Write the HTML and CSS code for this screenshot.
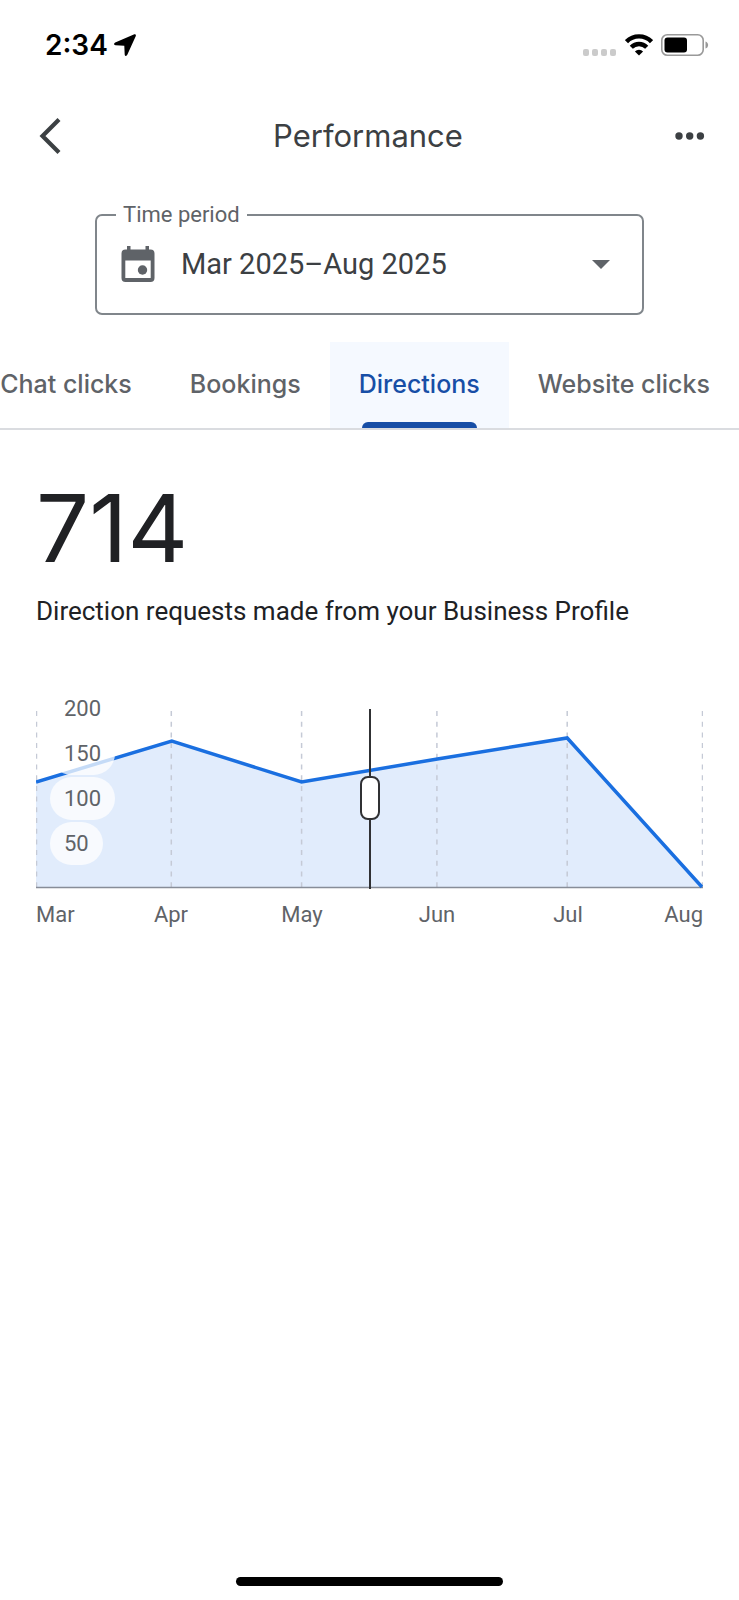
FILE: index.html
```html
<!DOCTYPE html>
<html lang="en">
<head>
<meta charset="utf-8">
<meta name="viewport" content="width=device-width, initial-scale=1">
<title>Performance</title>
<link rel="stylesheet" href="styles.css">
</head>
<body>
<div class="screen">
  <div class="status">
    <div class="status-left">
      <span class="clock">2:34</span>
      <svg class="location" viewBox="0 0 22 22" width="22" height="22" aria-hidden="true"><path d="M19.800.4 1.200 8.600C-.5 9.400-.2 11.200 1.500 11.300L10.300 11.800 10.700 20.400C10.800 22.200 12.600 22.400 13.300 20.800L21.700 2.300C22.300.8 21.300-.3 19.800.4Z"/></svg>
    </div>
    <div class="status-right">
      <svg viewBox="0 0 34 22" width="34" height="22" aria-hidden="true" fill="#cbcbcb"><rect x="0" y="15" width="6" height="7" rx="2"/><rect x="9" y="15" width="6" height="7" rx="2"/><rect x="18" y="15" width="6" height="7" rx="2"/><rect x="27" y="15" width="6" height="7" rx="2"/></svg>
      <svg viewBox="0 0 28 22" width="28" height="22" aria-hidden="true" fill="none" stroke="#000" stroke-width="4.400"><path d="M1.500 7.600A17.500 17.500 0 0 1 26.500 7.600"/><path d="M6.300 13.200A10.900 10.900 0 0 1 21.700 13.200"/><path d="M14 21.600 9.900 17.500A5.800 5.800 0 0 1 18.100 17.500Z" fill="#000" stroke="none"/></svg>
      <svg viewBox="0 0 48 22" width="48" height="22" aria-hidden="true"><rect x=".8" y=".8" width="41.400" height="20.400" rx="5.500" fill="#fff" stroke="#999" stroke-width="1.600"/><rect x="3.500" y="3.500" width="22.500" height="15" rx="3" fill="#000"/><path d="M44.500 7.500C48 8.500 48 13.500 44.500 14.500Z" fill="#999"/></svg>
    </div>
  </div>

  <header class="appbar">
    <button class="icon-button" type="button" aria-label="Back">
      <svg viewBox="0 0 22 36" width="22" height="36"><path d="M20 1.500 3.500 18 20 34.500" fill="none" stroke="#3c4043" stroke-width="4.200"/></svg>
    </button>
    <h1 class="title">Performance</h1>
    <button class="icon-button" type="button" aria-label="More options">
      <svg viewBox="0 0 30 8" width="30" height="8" fill="#3c4043"><circle cx="4" cy="4" r="3.700"/><circle cx="14.700" cy="4" r="3.700"/><circle cx="25.400" cy="4" r="3.700"/></svg>
    </button>
  </header>

  <main>
    <fieldset class="period">
      <legend class="period-label"><label for="period">Time period</label></legend>
      <div class="period-row">
        <svg class="calendar" viewBox="0 0 34 36" width="34" height="36" aria-hidden="true"><path fill="#5f6368" fill-rule="evenodd" d="M6 0H9.500V3.500H24.500V0H28V3.500H29.500A4 4 0 0 1 33.500 7.500V32A4 4 0 0 1 29.500 36H4.500A4 4 0 0 1 .5 32V7.500A4 4 0 0 1 4.500 3.500H6ZM4.300 14.500V32H29.700V14.500Z"/><circle cx="21.500" cy="24" r="4.700" fill="#5f6368"/></svg>
        <select class="period-select" id="period"><option>Mar 2025–Aug 2025</option></select>
        <svg class="arrow" viewBox="0 0 18 9" width="18" height="9" aria-hidden="true"><path d="M0 0H18L9 9Z" fill="#5f6368"/></svg>
      </div>
    </fieldset>

    <div class="tabs" role="tablist">
      <button class="tab" type="button" role="tab" aria-selected="false">Chat clicks</button>
      <button class="tab" type="button" role="tab" aria-selected="false">Bookings</button>
      <button class="tab tab-active" type="button" role="tab" aria-selected="true">Directions</button>
      <button class="tab" type="button" role="tab" aria-selected="false">Website clicks</button>
    </div>

    <section class="metric">
      <p class="total">714</p>
      <p class="caption">Direction requests made from your Business Profile</p>

      <div class="chart">
        <div class="plot">
          <svg class="series" viewBox="0 0 668 180" preserveAspectRatio="none" aria-hidden="true">
            <path d="M0 73 136 32 266 73 402 50 532 29 667 179H0Z" fill="#e1ecfc"/>
            <path d="M.5 2V179M135.500 2V179M266 2V179M401.500 2V179M532 2V179M667.500 2V179" stroke="#c5cad6" stroke-width="1.500" stroke-dasharray="5 5.700" fill="none"/>
            <path d="M0 178.500H668" stroke="#878d98" stroke-width="1.600"/>
            <path d="M0 73 136 32 266 73 402 50 532 29 667 178" fill="none" stroke="#1a6fe0" stroke-width="3.500"/>
          </svg>
          <div class="scale"><span>200</span><span>150</span><span>100</span><span>50</span></div>
          <div class="marker"></div>
          <input class="scrubber" type="range" min="0" max="100" value="50" aria-label="Date on chart">
        </div>
        <div class="months"><span>Mar</span><span>Apr</span><span>May</span><span>Jun</span><span>Jul</span><span>Aug</span></div>
      </div>
    </section>
  </main>
  <div class="home-bar"></div>
</div>
</body>
</html>
```
FILE: styles.css
```css
* { box-sizing: border-box; }

body {
  margin: 0;
  background: #fff;
  color: #202124;
  font-family: Roboto, "Liberation Sans", sans-serif;
}

button, select { font: inherit; }
svg { display: block; flex: none; }
p, h1 { margin: 0; font-weight: 400; }

.screen {
  display: flex;
  flex-direction: column;
  min-height: 100vh;
  overflow: hidden;
}

main { flex: 1; }

.status {
  display: flex;
  justify-content: space-between;
  align-items: center;
  height: 89px;
  padding: 0 30px 0 45px;
}
.status-left { display: flex; align-items: center; gap: 6px; }
.status-right { display: flex; align-items: center; gap: 8px; }
.clock {
  color: #000;
  font-family: Inter, sans-serif;
  font-size: 28px;
  font-weight: 600;
  line-height: 32px;
}

.appbar {
  display: flex;
  justify-content: space-between;
  align-items: center;
  height: 94px;
  padding: 0 34px 0 39px;
}
.icon-button {
  display: flex;
  padding: 0;
  border: 0;
  background: none;
}
.title {
  color: #3c4043;
  font-family: Inter, sans-serif;
  font-size: 31px;
  line-height: 40px;
}

.period {
  margin: 20px 95px 27px;
  padding: 0 24px 0 19px;
  border: 2px solid #80868b;
  border-radius: 7px;
  min-width: 0;
}
.period-label {
  padding: 0 7px;
  color: #5f6368;
  font-size: 22px;
  line-height: 24px;
}
.period-row {
  display: flex;
  align-items: center;
  height: 86px;
  padding: 0 0 12px 5px;
}
.period-select {
  flex: 1;
  min-width: 0;
  height: 48px;
  margin-left: 26px;
  padding: 0;
  border: 0;
  background: none;
  appearance: none;
  color: #3c4043;
  font-size: 29px;
}
.arrow { margin-right: 8px; }

.tabs {
  display: flex;
  justify-content: flex-end;
  border-bottom: 2px solid #dadce0;
}
.tab {
  position: relative;
  flex: none;
  height: 86px;
  padding: 0 29px 2px;
  border: 0;
  background: none;
  color: #5f6368;
  font-family: Inter, sans-serif;
  font-size: 25px;
  font-weight: 500;
  white-space: nowrap;
}
.tab-active { background: #f5f9ff; color: #174ea6; }
.tab-active::after {
  content: "";
  position: absolute;
  right: 32px;
  bottom: 0;
  left: 32px;
  height: 6px;
  border-radius: 6px 6px 0 0;
  background: #174ea6;
}

.metric { padding: 50px 36px 0; }
.total {
  font-family: Inter, sans-serif;
  font-size: 94px;
  line-height: 96px;
}
.caption { margin-top: 19px; font-size: 26px; line-height: 32px; }

.chart { margin-top: 82px; color: #5f6368; font-size: 22px; line-height: 27px; }
.plot { position: relative; height: 180px; }
.series { width: 100%; height: 100%; }
.scale {
  position: absolute;
  top: -22px;
  left: 14px;
  display: flex;
  flex-direction: column;
  align-items: flex-start;
  gap: 2px;
}
.scale span {
  padding: 8px 14px;
  border-radius: 22px;
  background: rgba(255, 255, 255, 0.75);
}
.marker {
  position: absolute;
  top: 0;
  bottom: 0;
  left: 50%;
  width: 2px;
  margin-left: -1px;
  background: #303134;
}
.scrubber {
  position: absolute;
  top: 67px;
  left: 0;
  width: 100%;
  height: 44px;
  margin: 0;
  background: none;
  appearance: none;
}
.scrubber::-webkit-slider-thumb {
  width: 20px;
  height: 44px;
  border: 2px solid #303134;
  border-radius: 8px;
  background: #fff;
  appearance: none;
}
.months {
  display: grid;
  grid-template-columns: 67fr 136fr 126fr 144fr 118fr 76fr;
  margin-top: 12px;
  text-align: center;
}
.months span:first-child { text-align: left; }
.months span:last-child { text-align: right; }

.home-bar {
  width: 36%;
  height: 9px;
  margin: 0 auto 14px;
  border-radius: 5px;
  background: #000;
}
```
